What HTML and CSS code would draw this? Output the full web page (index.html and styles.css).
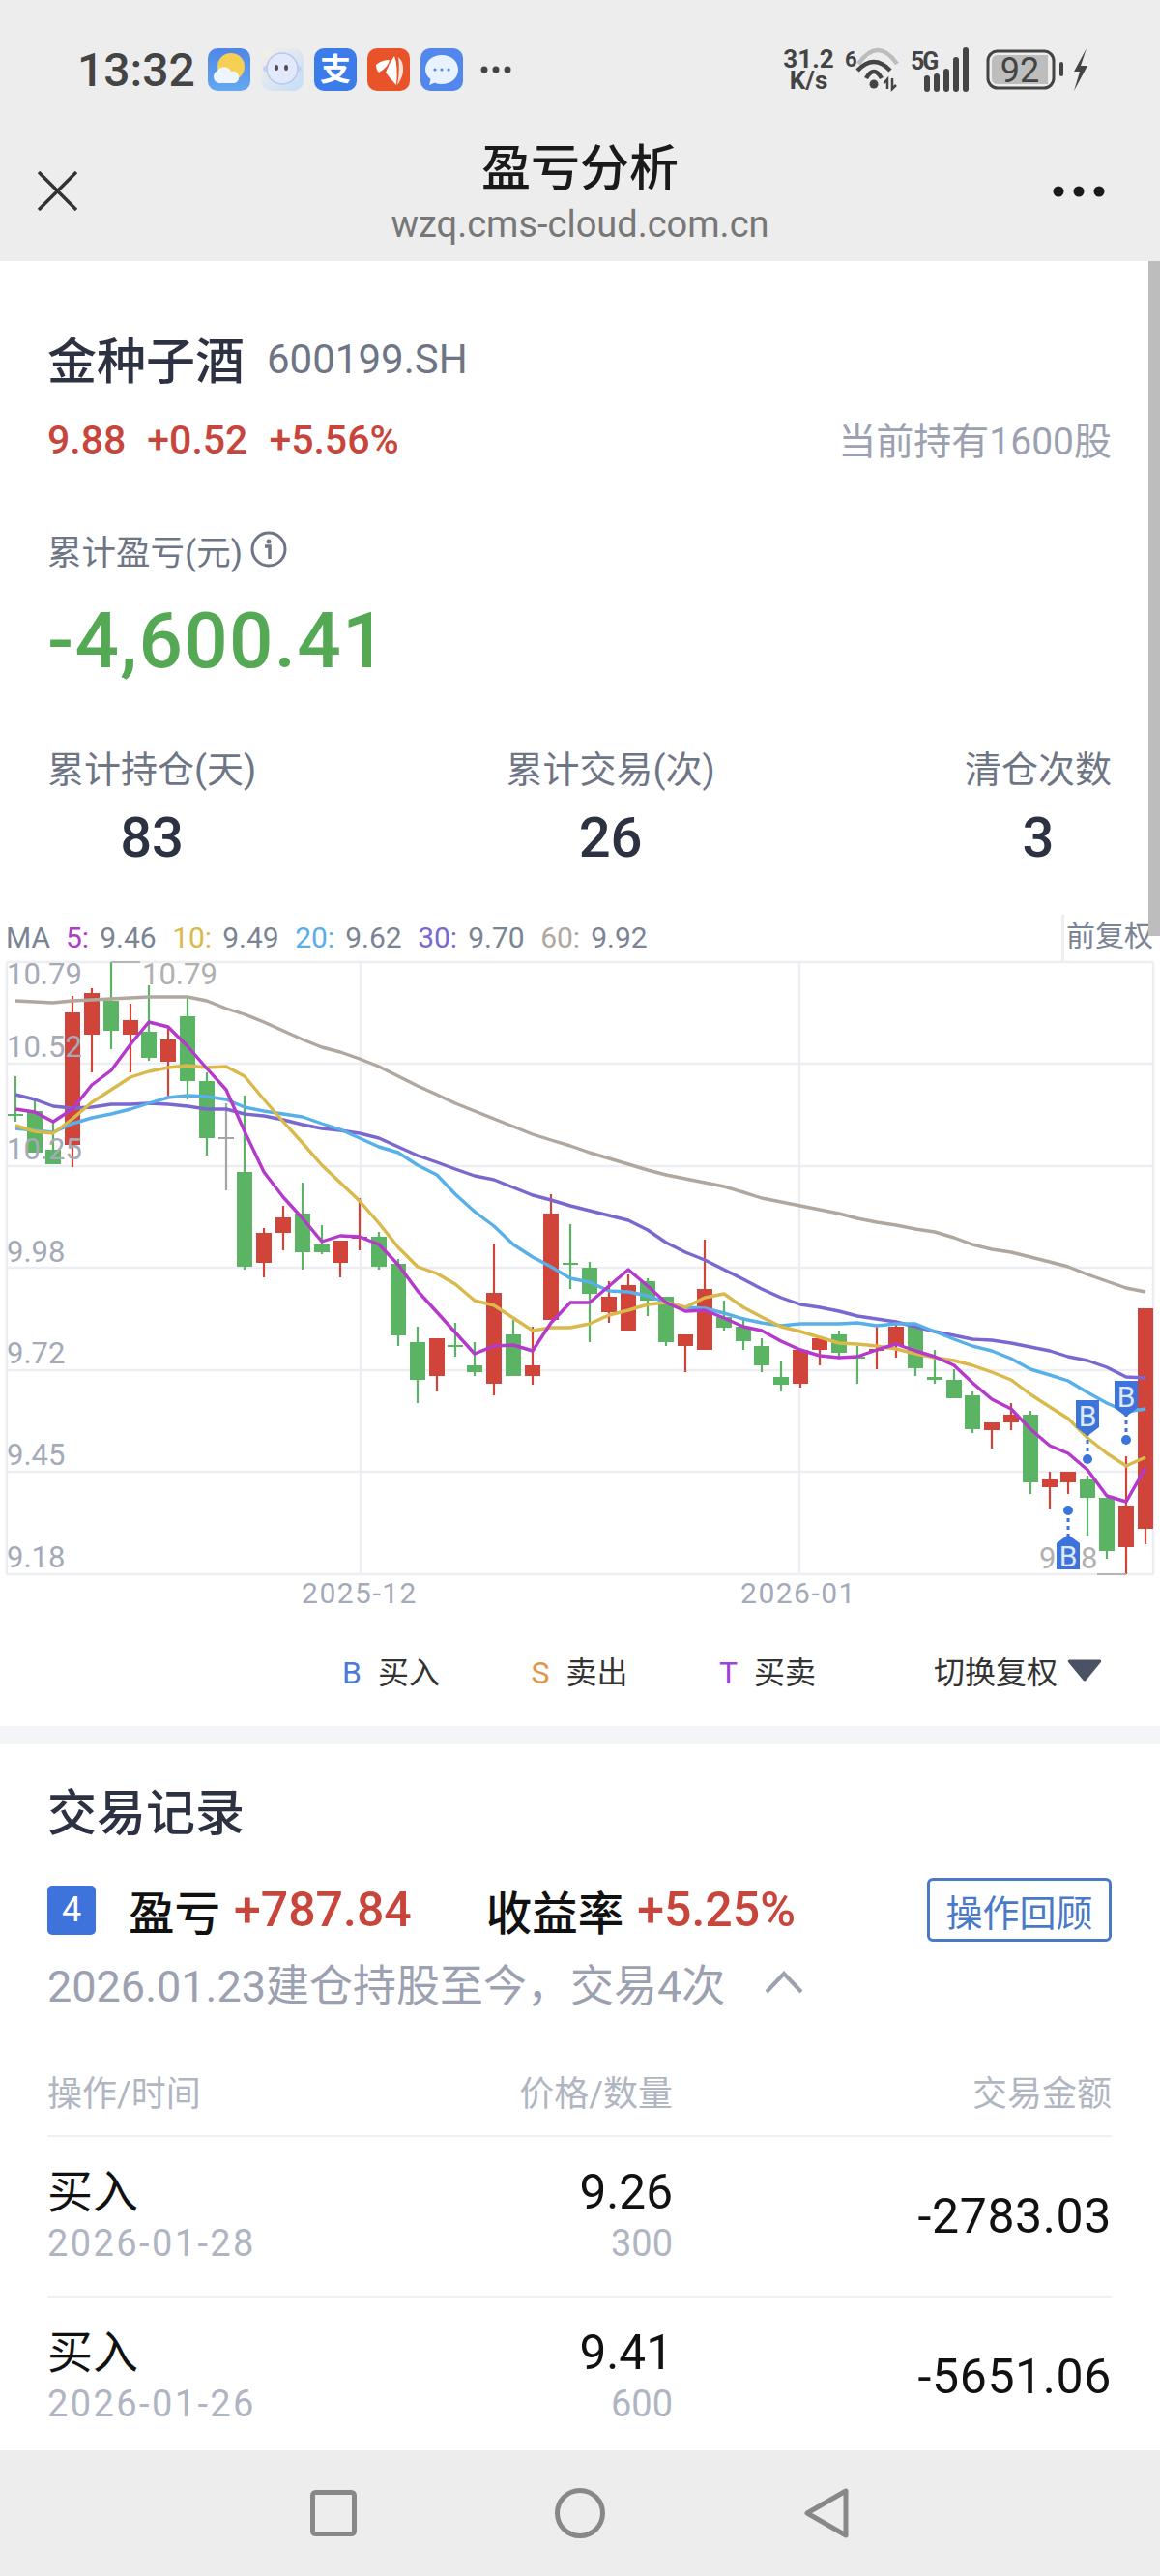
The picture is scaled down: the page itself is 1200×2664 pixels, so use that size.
FILE: index.html
```html
<!DOCTYPE html>
<html lang="zh-CN">

<head>
    <meta charset="UTF-8">
    <meta name="viewport" content="width=device-width, initial-scale=1.0">
    <title>盈亏分析</title>
    <link rel="stylesheet" href="styles.css">
</head>

<body>
    <header class="top">
        <div class="status">
            <span class="time">13:32</span>
            <div class="apps">
                <svg class="app" viewBox="0 0 44 44">
                    <defs>
                        <linearGradient id="sky" x1="0" y1="0" x2="0" y2="1">
                            <stop offset="0" stop-color="#4f86e8" />
                            <stop offset="1" stop-color="#63a8f0" />
                        </linearGradient>
                        <linearGradient id="pale" x1="0" y1="0" x2="1" y2="1">
                            <stop offset="0" stop-color="#f6f1e6" />
                            <stop offset="1" stop-color="#c4dcfa" />
                        </linearGradient>
                    </defs>
                    <rect width="44" height="44" rx="10" fill="url(#sky)" />
                    <circle cx="24" cy="19" r="14" fill="#f8cf55" />
                    <path d="M11 36a7 7 0 0 1-1-13 8 8 0 0 1 14 1 6 6 0 0 1 4 12z" fill="#eef5fc" />
                </svg>
                <svg class="app" viewBox="0 0 44 44">
                    <rect width="44" height="44" rx="10" fill="url(#pale)" />
                    <circle cx="5" cy="21" r="3" fill="#c5d0f2" />
                    <circle cx="39" cy="21" r="3" fill="#c5d0f2" />
                    <circle cx="22" cy="21" r="16" fill="#e3e9fc" stroke="#b9c6ee" stroke-width="1.500" />
                    <ellipse cx="16" cy="20" rx="2" ry="3" fill="#5a4a50" />
                    <ellipse cx="26" cy="20" rx="2" ry="3" fill="#5a4a50" />
                </svg>
                <svg class="app" viewBox="0 0 44 44">
                    <rect width="44" height="44" rx="10" fill="#3b7bea" />
                    <text class="app-char" x="22" y="33">支</text>
                </svg>
                <svg class="app" viewBox="0 0 44 44">
                    <rect width="44" height="44" rx="10" fill="#e8532a" />
                    <path d="M9 17q6-5 14-5-1 7-11 13-3-3-3-8z" fill="#fff" />
                    <path d="M19 25q3-9 9-17 4 10 2 30-6-6-11-13z" fill="#fff" />
                    <path d="M32 9q6 5 5 15-1 7-6 14 3-16 1-29z" fill="#fbe3d9" />
                </svg>
                <svg class="app" viewBox="0 0 44 44">
                    <rect width="44" height="44" rx="10" fill="#5288ee" />
                    <path d="M22 7c10 0 17 6.500 17 15s-7 15-17 15c-3 0-5-.5-7-1.500L9 38l1.500-6C7 29 5 26 5 22 5 13.500 12 7 22 7z" fill="#e9f2ff" />
                    <circle cx="15" cy="22" r="1.600" fill="#5288ee" />
                    <circle cx="22" cy="22" r="1.600" fill="#5288ee" />
                    <circle cx="29" cy="22" r="1.600" fill="#5288ee" />
                </svg>
            </div>
            <svg class="more-apps" viewBox="0 0 32 8">
                <circle cx="4" cy="4" r="3.500" />
                <circle cx="16" cy="4" r="3.500" />
                <circle cx="28" cy="4" r="3.500" />
            </svg>

            <div class="sys">
                <div class="speed"><span>31.2</span><span>K/s</span></div>
                <svg class="wifi" viewBox="0 0 54 42">
                    <text class="sys-mini" x="0" y="18">6</text>
                    <path d="M14 15Q34-13 54 15" fill="none" stroke="#bdbdbd" stroke-width="4.500" />
                    <path d="M13 22Q30 4 47 22" fill="none" stroke="#444" stroke-width="4.500" />
                    <path d="M22 30Q30 16 38 30" fill="none" stroke="#444" stroke-width="4.500" />
                    <circle cx="30" cy="36" r="4.500" fill="#444" />
                    <path d="M44 41V31l-3.500 4M49 30v11l4-4" fill="none" stroke="#444" stroke-width="2.500" />
                </svg>
                <svg class="signal" viewBox="0 0 61 42">
                    <text class="sys-mini narrow" x="0" y="21">5G</text>
                    <path d="M17 41V30M27 41V28M37 41V23M47 41V11M57 41V1" fill="none" stroke="#444" stroke-width="6" stroke-linecap="round" />
                </svg>
                <svg class="battery" viewBox="0 0 105 44">
                    <rect x="2" y="3" width="68" height="38" rx="10" fill="none" stroke="#444" stroke-width="3" />
                    <path d="M12 7h52v30H12q-6 0-6-6V13q0-6 6-6z" fill="#bdbdbd" />
                    <text class="battery-level" x="35" y="35">92</text>
                    <rect x="76" y="14" width="4" height="15" rx="2" fill="#444" />
                    <path d="M104 0 91 24h6l-6 20 14-26h-7z" fill="#444" />
                </svg>
            </div>
        </div>

        <div class="appbar">
            <svg class="close" viewBox="0 0 41 41">
                <path d="M1 1l39 39M40 1 1 40" fill="none" stroke="#333" stroke-width="3.500" />
            </svg>
            <div class="appbar-title">
                <h1>盈亏分析</h1>
                <p>wzq.cms-cloud.com.cn</p>
            </div>
            <svg class="menu" viewBox="0 0 54 12">
                <circle cx="6" cy="6" r="5.500" />
                <circle cx="27" cy="6" r="5.500" />
                <circle cx="48" cy="6" r="5.500" />
            </svg>
        </div>
    </header>

    <main class="page">
        <div class="scroll-thumb"></div>

        <section class="summary">
            <div class="stock">
                <h2>金种子酒</h2>
                <span class="code">600199.SH</span>
            </div>
            <div class="quote">
                <div class="quote-nums">
                    <span>9.88</span>
                    <span>+0.52</span>
                    <span>+5.56%</span>
                </div>
                <span class="holding">当前持有1600股</span>
            </div>
            <div class="profit-label">
                累计盈亏(元)
                <svg class="info" viewBox="0 0 38 38">
                    <circle cx="19" cy="19" r="17" fill="none" stroke="#6e7585" stroke-width="3" />
                    <circle cx="19" cy="11" r="2.500" fill="#6e7585" />
                    <path d="M15 16h5v13" fill="none" stroke="#6e7585" stroke-width="3.500" />
                </svg>
            </div>
            <div class="profit-value">-4,600.41</div>
            <div class="stats">
                <div class="stat">
                    <span>累计持仓(天)</span>
                    <strong>83</strong>
                </div>
                <div class="stat">
                    <span>累计交易(次)</span>
                    <strong>26</strong>
                </div>
                <div class="stat">
                    <span>清仓次数</span>
                    <strong>3</strong>
                </div>
            </div>
        </section>

        <section class="kline">
            <div class="ma-row">
                <span class="ma-name">MA</span>
                <span class="ma5">5:</span><span class="ma-val">9.46</span>
                <span class="ma10">10:</span><span class="ma-val">9.49</span>
                <span class="ma20">20:</span><span class="ma-val">9.62</span>
                <span class="ma30">30:</span><span class="ma-val">9.70</span>
                <span class="ma60">60:</span><span class="ma-val">9.92</span>
                <span class="adjust">前复权</span>
            </div>

            <svg class="chart" viewBox="0 993 1200 672">
                <!-- 网格 -->
                <path class="grid" d="M7 995H1193M7 1100H1193M7 1206H1193M7 1311H1193M7 1417H1193M7 1522H1193M7 1628H1193M7 995V1628M373 995V1628M827 995V1628M1193 995V1628" />

                <!-- K线：影线 + 实体 -->
                <path class="wick up" d="M75 1030V1207M95 1022V1109M135 1038V1109M174 1063V1135M273 1270V1321M293 1247V1293M352 1283V1321M372 1239V1293M364 1280h16M452 1384V1439M511 1286V1443M551 1372V1432M570 1235V1365M630 1325V1368M650 1318V1376M709 1380V1419M729 1282V1396M828 1396V1435M848 1384V1412M907 1372V1416M899 1396h16M927 1370V1404M1026 1471V1498M1046 1451V1479M1086 1522V1561M1105 1522V1545M1165 1506V1628M1185 1353V1597" />
                <path class="wick down" d="M16 1113V1160M8 1153h16M36 1137V1192M55 1160V1204M115 995V1085M154 1019V1097M194 1030V1137M214 1109V1195M253 1133V1313M313 1223V1313M333 1267V1297M392 1274V1313M412 1302V1392M432 1372V1451M471 1368V1403M463 1392h16M491 1388V1423M531 1365V1423M590 1266V1333M582 1307h16M610 1305V1388M670 1322V1361M689 1341V1392M749 1345V1376M769 1362V1396M788 1384V1419M808 1408V1439M868 1376V1403M887 1392V1431M879 1404h16M947 1372V1423M967 1396V1431M987 1416V1446M1006 1439V1482M1066 1459V1545M1125 1526V1588M1145 1549V1612" />
                <path class="wick flat" d="M234 1141V1231M226 1177h16" />
                <path class="body up" d="M75 1047V1184M95 1027V1070M135 1055V1070M174 1075V1098M273 1275V1306M293 1259V1275M352 1283V1306M452 1384V1423M511 1337V1431M551 1412V1423M570 1255V1365M630 1341V1357M650 1329V1376M709 1380V1392M729 1333V1396M828 1396V1431M848 1384V1396M927 1372V1392M1026 1471V1479M1046 1463V1471M1086 1530V1538M1105 1522V1533M1165 1557V1600M1185 1353V1581" />
                <path class="body down" d="M36 1149V1192M55 1189V1204M115 1035V1066M154 1067V1094M194 1051V1118M214 1118V1177M253 1212V1310M313 1255V1295M333 1287V1295M392 1279V1310M412 1307V1381M432 1388V1427M491 1412V1419M531 1380V1423M610 1311V1338M670 1325V1345M689 1341V1388M749 1362V1373M769 1372V1387M788 1392V1412M808 1424V1432M868 1380V1399M947 1372V1415M967 1424V1427M987 1427V1446M1006 1443V1478M1066 1463V1533M1125 1530V1549M1145 1549V1604" />

                <!-- 均线 -->
                <polyline class="line line60" points="16,1035 55,1037 75,1035 115,1033 154,1031 174,1031 194,1031 214,1035 234,1043 253,1049 273,1057 293,1066 313,1075 333,1083 352,1088 372,1095 392,1103 412,1113 432,1123 452,1132 471,1141 491,1149 511,1157 531,1165 551,1173 570,1179 590,1185 610,1192 630,1198 650,1204 670,1210 689,1215 709,1219 729,1223 749,1227 769,1233 788,1239 808,1243 828,1247 848,1251 868,1255 887,1260 907,1264 927,1267 947,1271 967,1274 987,1280 1006,1287 1026,1292 1046,1295 1066,1300 1086,1305 1105,1310 1125,1318 1145,1325 1165,1332 1185,1336" />
                <polyline class="line line30" points="16,1132 36,1137 55,1144 75,1146 95,1145 115,1142 135,1142 154,1141 174,1142 194,1144 214,1147 234,1147 253,1152 273,1154 293,1158 313,1163 333,1167 352,1169 372,1172 392,1177 412,1186 432,1195 452,1202 471,1209 491,1216 511,1220 531,1228 551,1236 570,1241 590,1247 610,1252 630,1257 650,1262 670,1272 689,1285 709,1295 729,1303 749,1313 769,1323 788,1333 808,1342 828,1349 848,1352 868,1356 887,1361 907,1364 927,1367 947,1372 967,1377 987,1381 1006,1385 1026,1386 1046,1389 1066,1393 1086,1397 1105,1403 1125,1407 1145,1414 1165,1424 1185,1425" />
                <polyline class="line line20" points="16,1167 36,1169 55,1171 75,1162 95,1156 115,1152 135,1147 154,1141 174,1135 194,1133 214,1134 234,1137 253,1145 273,1149 293,1152 313,1155 333,1162 352,1168 372,1177 392,1186 412,1192 432,1205 452,1215 471,1235 491,1253 511,1268 531,1287 551,1300 570,1310 590,1322 610,1326 630,1335 650,1336 670,1340 689,1347 709,1352 729,1353 749,1358 769,1364 788,1368 808,1371 828,1369 848,1369 868,1369 887,1368 907,1371 927,1369 947,1369 967,1377 987,1385 1006,1392 1026,1397 1046,1405 1066,1416 1086,1422 1105,1428 1125,1440 1145,1451 1165,1460 1185,1457" />
                <polyline class="line line10" points="16,1164 36,1170 55,1172 75,1157 95,1140 115,1127 135,1114 154,1108 174,1104 194,1102 214,1104 234,1103 253,1113 273,1137 293,1160 313,1182 333,1205 352,1223 372,1242 392,1265 412,1290 432,1310 452,1317 471,1328 491,1345 511,1350 531,1363 551,1376 570,1373 590,1373 610,1369 630,1360 650,1355 670,1349 689,1347 709,1352 729,1342 749,1338 769,1352 788,1362 808,1372 828,1377 848,1383 868,1389 887,1390 907,1392 927,1395 947,1400 967,1404 987,1407 1006,1412 1026,1419 1046,1427 1066,1442 1086,1455 1105,1467 1125,1487 1145,1503 1165,1516 1185,1507" />
                <polyline class="line line5" points="16,1147 36,1150 55,1160 75,1147 95,1122 115,1107 135,1080 154,1057 174,1062 194,1082 214,1105 234,1127 253,1170 273,1212 293,1238 313,1260 333,1284 352,1278 372,1279 392,1287 412,1308 432,1335 452,1357 471,1378 491,1400 511,1392 531,1391 551,1397 570,1368 590,1347 610,1347 630,1330 650,1313 670,1330 689,1347 709,1356 729,1355 749,1363 769,1372 788,1376 808,1387 828,1396 848,1402 868,1404 887,1403 907,1396 927,1390 947,1397 967,1403 987,1412 1006,1430 1026,1447 1046,1457 1066,1478 1086,1495 1105,1503 1125,1520 1145,1547 1165,1553 1185,1518" />

                <!-- 坐标轴文字 -->
                <text class="axis" x="7" y="1018">10.79</text>
                <text class="axis" x="7" y="1093">10.52</text>
                <text class="axis" x="7" y="1199">10.25</text>
                <text class="axis" x="7" y="1305">9.98</text>
                <text class="axis" x="7" y="1410">9.72</text>
                <text class="axis" x="7" y="1515">9.45</text>
                <text class="axis" x="7" y="1621">9.18</text>
                <text class="axis axis-date" x="372" y="1658">2025-12</text>
                <text class="axis axis-date" x="826" y="1658">2026-01</text>

                <!-- 最高/最低 -->
                <path class="extreme" d="M115 995H145M1135 1628H1165" />
                <text class="extreme-label" x="147" y="1018">10.79</text>
                <text class="extreme-label" x="1075" y="1622">9.18</text>

                <!-- 买入点 -->
                <path class="mark-link" d="M1105 1562V1588M1125 1509V1483M1165 1489V1463" />
                <circle class="mark-dot" cx="1105" cy="1562" r="5" />
                <circle class="mark-dot" cx="1125" cy="1509" r="5" />
                <circle class="mark-dot" cx="1165" cy="1489" r="5" />
                <path class="mark-tag" d="M1105 1587l12 9v27h-24v-27z" />
                <path class="mark-tag" d="M1113 1448h24v28l-12 9-12-9z" />
                <path class="mark-tag" d="M1153 1428h24v28l-12 9-12-9z" />
                <text class="mark-text" x="1105" y="1620">B</text>
                <text class="mark-text" x="1125" y="1475">B</text>
                <text class="mark-text" x="1165" y="1455">B</text>
            </svg>

            <div class="legend">
                <div class="legend-item"><b class="tag-b">B</b>买入</div>
                <div class="legend-item"><b class="tag-s">S</b>卖出</div>
                <div class="legend-item"><b class="tag-t">T</b>买卖</div>
                <div class="legend-switch">
                    切换复权
                    <svg viewBox="0 0 36 22">
                        <path d="M3 2h30L18 20z" fill="#4b5264" stroke="#4b5264" stroke-width="3" stroke-linejoin="round" />
                    </svg>
                </div>
            </div>
        </section>

        <section class="records">
            <h2>交易记录</h2>
            <div class="round">
                <span class="round-no">4</span>
                <span class="round-label">盈亏</span>
                <span class="round-num num-profit">+787.84</span>
                <span class="round-label rate-label">收益率</span>
                <span class="round-num">+5.25%</span>
                <button class="review">操作回顾</button>
            </div>
            <div class="round-sub">
                2026.01.23建仓持股至今，交易4次
                <svg viewBox="0 0 40 24">
                    <path d="M2 22 20 3l18 19" fill="none" stroke="#9ba1b0" stroke-width="4" />
                </svg>
            </div>

            <div class="table-head">
                <span>操作/时间</span>
                <span>价格/数量</span>
                <span>交易金额</span>
            </div>
            <div class="trade">
                <div class="cell">
                    <span class="main">买入</span>
                    <span class="sub date">2026-01-28</span>
                </div>
                <div class="cell right">
                    <span class="main">9.26</span>
                    <span class="sub">300</span>
                </div>
                <div class="amount">-2783.03</div>
            </div>
            <div class="trade">
                <div class="cell">
                    <span class="main">买入</span>
                    <span class="sub date">2026-01-26</span>
                </div>
                <div class="cell right">
                    <span class="main">9.41</span>
                    <span class="sub">600</span>
                </div>
                <div class="amount">-5651.06</div>
            </div>
        </section>
    </main>

    <footer class="navkeys">
        <svg class="key-square" viewBox="0 0 48 48">
            <rect x="2.500" y="2.500" width="43" height="43" rx="3" />
        </svg>
        <svg class="key-circle" viewBox="0 0 52 52">
            <circle cx="26" cy="26" r="23.500" />
        </svg>
        <svg class="key-back" viewBox="0 0 46 52">
            <path d="M43 3v46L3 26z" stroke-linejoin="round" />
        </svg>
    </footer>
</body>

</html>
```

FILE: styles.css
```css
* {
    box-sizing: border-box;
}

html,
body {
    margin: 0;
    height: 2664px;
    overflow: hidden;
}

body {
    display: flex;
    flex-direction: column;
    background: #fff;
    color: #2c3242;
    font-family: Roboto, "Noto Sans CJK SC", sans-serif;
}

h1,
h2,
p {
    margin: 0;
}

/* 顶部 */
.top {
    height: 270px;
    background: #ededed;
    flex-shrink: 0;
}

.status {
    height: 144px;
    padding: 0 75px 0 80px;
    display: flex;
    align-items: center;
}

.time {
    font-size: 48px;
    font-weight: 500;
    color: #444;
    width: 135px;
}

.apps {
    display: flex;
    gap: 11px;
}

.app {
    width: 44px;
    height: 44px;
    display: block;
}

.app-char {
    font-size: 32px;
    font-weight: 700;
    fill: #fff;
    text-anchor: middle;
}

.more-apps {
    width: 32px;
    height: 8px;
    margin-left: 18px;
    fill: #444;
}

.sys {
    margin-left: auto;
    display: flex;
    align-items: center;
}

.sys svg {
    overflow: visible;
}

.speed {
    width: 53px;
    display: flex;
    flex-direction: column;
    align-items: center;
    font-size: 26px;
    line-height: 22px;
    font-weight: 700;
    color: #444;
}

.wifi {
    width: 54px;
    height: 42px;
    margin-left: 11px;
}

.signal {
    width: 61px;
    height: 42px;
    margin-left: 14px;
}

.battery {
    width: 105px;
    height: 44px;
    margin-left: 17px;
}

.sys-mini {
    font-size: 22px;
    font-weight: 700;
    fill: #444;
}

.sys-mini.narrow {
    font-size: 25px;
    letter-spacing: -2px;
}

.battery-level {
    font-size: 36px;
    fill: #444;
    text-anchor: middle;
}

.appbar {
    height: 126px;
    padding: 0 36px;
    display: grid;
    grid-template-columns: 1fr auto 1fr;
}

.close {
    width: 41px;
    height: 41px;
    margin: 33px 0 0 3px;
}

.appbar-title {
    text-align: center;
}

.appbar-title h1 {
    font-size: 51px;
    line-height: 62px;
    font-weight: 500;
    color: #1a1a1a;
}

.appbar-title p {
    margin-top: 4px;
    font-size: 38px;
    line-height: 44px;
    color: #777;
}

.menu {
    width: 54px;
    height: 12px;
    margin: 48px 21px 0 0;
    justify-self: end;
    fill: #1a1a1a;
}

/* 内容区 */
.page {
    flex: 1;
    min-height: 0;
    overflow: hidden;
    position: relative;
}

.scroll-thumb {
    position: absolute;
    top: 0;
    right: 0;
    width: 12px;
    height: 698px;
    background: #bdbdbd;
}

.summary {
    padding: 70px 50px 0 49px;
}

.stock {
    display: flex;
    align-items: center;
    height: 60px;
}

.stock h2 {
    font-size: 51px;
    font-weight: 500;
}

.code {
    margin: 2px 0 0 23px;
    font-size: 42px;
    color: #6e7585;
}

.quote {
    margin-top: 30px;
    height: 50px;
    display: flex;
    align-items: center;
    justify-content: space-between;
}

.quote-nums {
    display: flex;
    gap: 22px;
    font-size: 41px;
    font-weight: 500;
    color: #c8453c;
}

.holding {
    font-size: 39px;
    margin-top: -4px;
    color: #9ba1b0;
}

.profit-label {
    margin-top: 66px;
    height: 44px;
    display: flex;
    align-items: center;
    gap: 8px;
    font-size: 35.500px;
    color: #6e7585;
}

.info {
    width: 38px;
    height: 38px;
}

.profit-value {
    margin-top: 28px;
    height: 90px;
    line-height: 90px;
    font-size: 80px;
    font-weight: 500;
    letter-spacing: 1.300px;
    color: #55a955;
}

.stats {
    margin-top: 65px;
    display: flex;
    justify-content: space-between;
}

.stat {
    display: flex;
    flex-direction: column;
    align-items: center;
}

.stat span {
    font-size: 38px;
    line-height: 46px;
    color: #6e7585;
}

.stat strong {
    margin-top: 17px;
    font-size: 58px;
    line-height: 60px;
    font-weight: 500;
}

/* K线 */
.kline {
    margin-top: 51px;
}

.ma-row {
    height: 48px;
    padding: 0 0 3px 6px;
    display: flex;
    align-items: center;
    font-size: 30px;
    color: #7a8494;
}

.ma-name {
    width: 62px;
}

.ma-val {
    margin-left: 11px;
    margin-right: 16.500px;
}

.ma5 {
    color: #b03ccb;
}

.ma10 {
    color: #d9b94a;
}

.ma20 {
    color: #5aaee8;
}

.ma30 {
    color: #7a68d0;
}

.ma60 {
    color: #b0a79f;
}

.adjust {
    margin-left: auto;
    height: 48px;
    line-height: 44px;
    width: 102px;
    padding-left: 2px;
    border-left: 3px solid #edeef3;
    font-size: 30px;
    white-space: nowrap;
}

.chart {
    display: block;
    width: 1200px;
    height: 672px;
    margin-top: -2px;
    overflow: visible;
}

.grid {
    fill: none;
    stroke: #edeef3;
    stroke-width: 2.500;
}

.wick {
    fill: none;
    stroke-width: 2.200;
}

.body {
    fill: none;
    stroke-width: 16;
}

.up {
    stroke: #d0443a;
}

.down {
    stroke: #5bb364;
}

.flat {
    stroke: #a5a5a5;
}

.line {
    fill: none;
    stroke-width: 3.400;
    stroke-linejoin: round;
}

.line5 {
    stroke: #b53acb;
}

.line10 {
    stroke: #d9b94a;
}

.line20 {
    stroke: #58b0e8;
}

.line30 {
    stroke: #7a68d0;
}

.line60 {
    stroke: #b0a79f;
}

.axis {
    font-size: 31px;
    fill: #a4aab8;
}

.axis-date {
    font-size: 30px;
    letter-spacing: 1.500px;
    text-anchor: middle;
}

.extreme {
    fill: none;
    stroke: #b5b5b5;
    stroke-width: 2;
}

.extreme-label {
    font-size: 31px;
    fill: #b0b0b0;
}

.mark-link {
    fill: none;
    stroke: #3d74dc;
    stroke-width: 3;
    stroke-dasharray: 4 4;
}

.mark-dot,
.mark-tag {
    fill: #3d74dc;
}

.mark-text {
    font-size: 30px;
    fill: #dfe9fb;
    text-anchor: middle;
}

.legend {
    margin-top: 38px;
    height: 48px;
    padding: 0 59px 0 354px;
    display: flex;
    align-items: center;
    gap: 94.500px;
    font-size: 32px;
    color: #333;
}

.legend-item b {
    font-weight: 400;
    margin-right: 17px;
}

.tag-b {
    color: #4a79d6;
}

.tag-s {
    color: #e0954a;
}

.tag-t {
    color: #a040e0;
}

.legend-switch {
    margin-left: auto;
    display: flex;
    align-items: center;
    gap: 9px;
}

.legend-switch svg {
    width: 38px;
    height: 23px;
}

/* 交易记录 */
.records {
    margin-top: 34px;
    padding: 42px 50px 0 49px;
    border-top: 19px solid #f4f5f9;
}

.records h2 {
    font-size: 51px;
    line-height: 60px;
    font-weight: 500;
}

.round {
    margin-top: 36px;
    height: 66px;
    display: flex;
    align-items: center;
}

.round-no {
    width: 50px;
    height: 51px;
    border-radius: 5px;
    background: #3f73dc;
    color: #fff;
    font-size: 36px;
    line-height: 51px;
    text-align: center;
}

.round-label {
    margin-left: 34px;
    font-size: 47.500px;
    font-weight: 500;
    color: #111;
}

.round-num {
    margin-left: 14px;
    font-size: 50px;
    font-weight: 500;
    color: #c8453c;
}

.rate-label {
    margin-left: 77px;
}

.review {
    margin-left: auto;
    width: 191px;
    height: 66px;
    padding: 0;
    background: #fff;
    border: 3px solid #4a79c8;
    border-radius: 6px;
    color: #4a79c8;
    font-family: inherit;
    font-size: 38px;
}

.round-sub {
    margin-top: 12px;
    height: 60px;
    display: flex;
    align-items: center;
    font-size: 45px;
    color: #9ba1b0;
}

.round-sub svg {
    width: 40px;
    height: 24px;
    margin-left: 41px;
}

.table-head,
.trade {
    display: grid;
    grid-template-columns: 401px 246px 1fr;
}

.table-head {
    margin-top: 64px;
    height: 66px;
    line-height: 44px;
    font-size: 36px;
    color: #b0b5c2;
    border-bottom: 2px solid #eef0f3;
}

.table-head span:nth-child(n+2) {
    text-align: right;
}

.trade {
    padding: 30px 0 27px;
    border-bottom: 2px solid #eef0f3;
}

.cell {
    display: flex;
    flex-direction: column;
}

.cell.right {
    align-items: flex-end;
}

.main {
    font-size: 47px;
    line-height: 54px;
    color: #111;
}

.right .main {
    font-size: 49.500px;
}

.sub {
    font-size: 38px;
    line-height: 53px;
    color: #b0b5c2;
}

.date {
    letter-spacing: 2.400px;
}

.amount {
    align-self: center;
    margin-top: -3px;
    text-align: right;
    font-size: 50px;
    letter-spacing: .6px;
    color: #111;
}

/* 底部导航键 */
.navkeys {
    height: 130px;
    flex-shrink: 0;
    background: #ededed;
    display: flex;
    align-items: center;
    padding-left: 321px;
}

.navkeys svg {
    display: block;
    fill: none;
    stroke: #888;
    stroke-width: 5;
}

.key-square {
    width: 48px;
    height: 48px;
}

.key-circle {
    width: 52px;
    height: 52px;
    margin-left: 205px;
}

.key-back {
    width: 46px;
    height: 52px;
    margin-left: 206px;
}
```
